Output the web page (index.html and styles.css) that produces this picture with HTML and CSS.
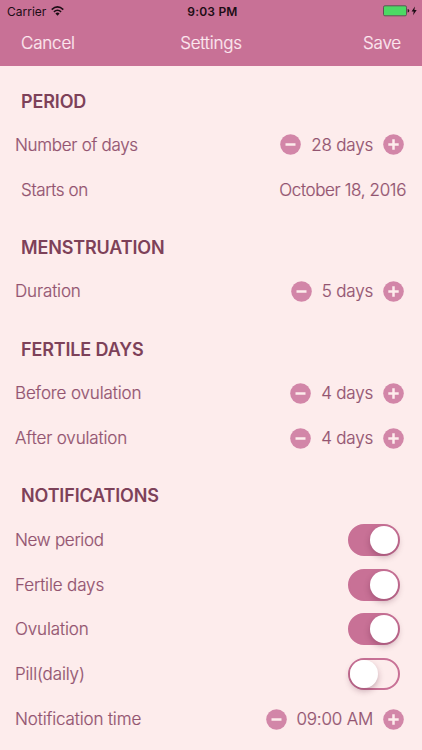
FILE: index.html
```html
<!DOCTYPE html>
<html lang="en">
<head>
  <meta charset="UTF-8" />
  <meta name="viewport" content="width=device-width, initial-scale=1.0" />
  <title>Settings</title>
  <link rel="stylesheet" href="styles.css">
</head>
<body>
  <svg class="sprite" width="0" height="0">
    <symbol id="minus" viewBox="0 0 21 21">
      <circle cx="10.5" cy="10.5" r="10.3" fill="#d286a8" />
      <path d="M5.5 10.5h10" stroke="#fdecec" stroke-width="2.5" />
    </symbol>
    <symbol id="plus" viewBox="0 0 21 21">
      <circle cx="10.5" cy="10.5" r="10.3" fill="#d286a8" />
      <path d="M5.3 10.5h10.4M10.5 5.3v10.4" stroke="#fdecec" stroke-width="2.5" />
    </symbol>
  </svg>

  <header class="top">
    <div class="status-bar">
      <div class="carrier">
        <span class="carrier-name">Carrier</span>
        <svg class="wifi" width="13" height="10" viewBox="0 0 13 10" fill="none" stroke="#1c0d15" stroke-width="1.6">
          <path d="M.7 3.6Q6.5-1.7 12.3 3.6" />
          <path d="M2.9 5.9Q6.5 2.6 10.1 5.9" />
          <path d="M6.5 9.7L4.4 7.5Q6.5 5.7 8.6 7.5Z" fill="#1c0d15" stroke="none" />
        </svg>
      </div>
      <span class="clock">9:03 PM</span>
      <div class="power">
        <svg width="35" height="12" viewBox="0 0 35 12">
          <rect x=".5" y=".8" width="23" height="10" rx="1.4" fill="#4cd964" stroke="#5f5355" />
          <path d="M24.6 4.1Q26.3 4.4 26.3 5.8T24.6 7.5Z" fill="#2c1620" />
          <path d="M31.9 1.5L28.6 6.5H30.7L30.1 10.2L33.7 5.1H31.4Z" fill="#1c0d15" />
        </svg>
      </div>
    </div>
    <nav class="nav-bar">
      <span class="cancel">Cancel</span>
      <span class="title">Settings</span>
      <span class="save">Save</span>
    </nav>
  </header>

  <main class="settings">
    <section>
      <h2>PERIOD</h2>
      <div class="row">
        <span class="label tight">Number of days</span>
        <div class="stepper">
          <svg><use href="#minus" /></svg>
          <span class="value">28 days</span>
          <svg><use href="#plus" /></svg>
        </div>
      </div>
      <div class="row date-row">
        <span class="label">Starts on</span>
        <span class="value">October 18, 2016</span>
      </div>
    </section>

    <section>
      <h2>MENSTRUATION</h2>
      <div class="row">
        <span class="label">Duration</span>
        <div class="stepper">
          <svg><use href="#minus" /></svg>
          <span class="value">5 days</span>
          <svg><use href="#plus" /></svg>
        </div>
      </div>
    </section>

    <section>
      <h2>FERTILE DAYS</h2>
      <div class="row">
        <span class="label">Before ovulation</span>
        <div class="stepper">
          <svg><use href="#minus" /></svg>
          <span class="value">4 days</span>
          <svg><use href="#plus" /></svg>
        </div>
      </div>
      <div class="row">
        <span class="label">After ovulation</span>
        <div class="stepper">
          <svg><use href="#minus" /></svg>
          <span class="value">4 days</span>
          <svg><use href="#plus" /></svg>
        </div>
      </div>
    </section>

    <section>
      <h2>NOTIFICATIONS</h2>
      <div class="row">
        <span class="label tight">New period</span>
        <div class="switch on"><div class="knob"></div></div>
      </div>
      <div class="row">
        <span class="label">Fertile days</span>
        <div class="switch on"><div class="knob"></div></div>
      </div>
      <div class="row">
        <span class="label">Ovulation</span>
        <div class="switch on"><div class="knob"></div></div>
      </div>
      <div class="row">
        <span class="label">Pill(daily)</span>
        <div class="switch"><div class="knob"></div></div>
      </div>
      <div class="row">
        <span class="label">Notification time</span>
        <div class="stepper">
          <svg><use href="#minus" /></svg>
          <span class="value">09:00 AM</span>
          <svg><use href="#plus" /></svg>
        </div>
      </div>
    </section>
  </main>
</body>
</html>
```

FILE: styles.css
```css
* {
  box-sizing: border-box;
  margin: 0;
  padding: 0;
}

body {
  height: 750px;
  overflow: hidden;
  background: #fdecec;
  color: #935470;
  font-family: Inter, "Liberation Sans", sans-serif;
  font-size: 17px;
  font-weight: 300;
}

span {
  white-space: nowrap;
}

.sprite {
  display: block;
}

.top {
  height: 65.5px;
  background: #c87196;
}

.status-bar {
  display: grid;
  grid-template-columns: 1fr auto 1fr;
  align-items: center;
  height: 22px;
  padding: 0 4px 0 7px;
  color: #1c0d15;
  font-size: 12px;
  font-weight: 400;
}

.carrier {
  display: flex;
  align-items: center;
  gap: 5px;
}

.clock {
  font-weight: 600;
  letter-spacing: 0.2px;
}

.power {
  display: flex;
  justify-content: flex-end;
}

.nav-bar {
  display: grid;
  grid-template-columns: 1fr auto 1fr;
  align-items: center;
  height: 42px;
  padding: 0 21px;
  color: #fde8f0;
  letter-spacing: -0.2px;
}

.nav-bar span,
.label,
.value {
  -webkit-text-stroke: 0.2px currentColor;
}

.save {
  text-align: right;
}

h2 {
  height: 57px;
  padding: 14px 21px 0;
  color: #7d4159;
  font-size: 18px;
  font-weight: 600;
  letter-spacing: -0.15px;
  line-height: 44px;
}

.row {
  display: flex;
  align-items: center;
  justify-content: space-between;
  height: 44.8px;
  padding: 0 18px 0 15px;
}

.date-row {
  padding: 0 16px 0 21px;
}

.label {
  letter-spacing: -0.14px;
}

.label.tight {
  letter-spacing: -0.3px;
}

.value {
  letter-spacing: -0.2px;
}

.date-row .label,
.date-row .value {
  letter-spacing: -0.36px;
}

.stepper {
  display: flex;
  align-items: center;
  gap: 10px;
}

.stepper svg {
  width: 21px;
  height: 21px;
}

.switch {
  width: 52px;
  height: 32px;
  margin-right: 4px;
  border: 2px solid #c87196;
  border-radius: 16px;
}

.knob {
  width: 28px;
  height: 28px;
  border-radius: 50%;
  background: #fff;
  box-shadow: 0 3px 6px rgba(80, 20, 50, 0.3);
}

.on {
  background: #c87196;
}

.on .knob {
  margin-left: 20px;
}
```
